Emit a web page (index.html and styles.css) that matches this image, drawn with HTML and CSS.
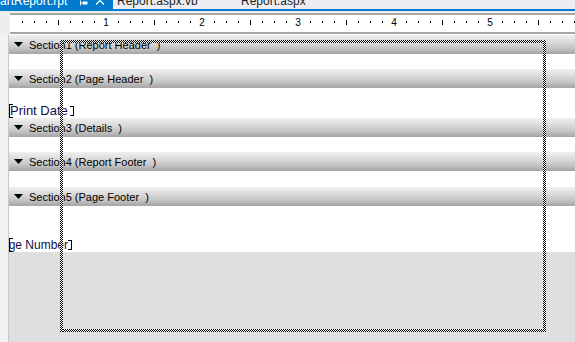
FILE: index.html
```
<!DOCTYPE html>
<html>
<head>
<meta charset="utf-8">
<link rel="stylesheet" href="styles.css">
</head>
<body>
<div class="tabs">
  <div class="tab tab-active">
    <span class="tab-label">artReport.rpt</span>
    <svg class="pin" width="9" height="9" viewBox="0 0 9 9"><path d="M1.5 0.5v5M1.5 3h2" stroke="#fff" stroke-width="1" fill="none"/><rect x="3.5" y="1.5" width="5" height="3" fill="#fff"/></svg>
    <svg class="close" width="10" height="9" viewBox="0 0 10 9"><path d="M1 -3.5L9 4.5M9 -3.5L1 4.5" stroke="#fff" stroke-width="1.2" fill="none"/></svg>
  </div>
  <div class="tab tab-vb"><span class="tab-label">Report.aspx.vb</span></div>
  <div class="tab"><span class="tab-label">Report.aspx</span></div>
</div>
<div class="tabline"></div>
<div class="ruler-row">
  <div class="ruler-gutter"></div>
  <div class="ruler">
    <svg width="565" height="17" viewBox="0 0 565 17">
      <path stroke="#000" stroke-width="1" fill="none" d="M12.5 6v2M24.5 6v2M36.5 6v2M60.5 6v2M72.5 6v2M84.5 6v2M108.5 6v2M120.5 6v2M132.5 6v2M156.5 6v2M168.5 6v2M180.5 6v2M204.5 6v2M216.5 6v2M228.5 6v2M252.5 6v2M264.5 6v2M276.5 6v2M300.5 6v2M312.5 6v2M324.5 6v2M348.5 6v2M360.5 6v2M372.5 6v2M396.5 6v2M408.5 6v2M420.5 6v2M444.5 6v2M456.5 6v2M468.5 6v2M492.5 6v2M504.5 6v2M516.5 6v2M540.5 6v2M552.5 6v2M564.5 6v2M48.5 5v5M144.5 5v5M240.5 5v5M336.5 5v5M432.5 5v5M528.5 5v5"/>
      <g class="ruler-num" text-anchor="middle">
        <text x="96" y="11">1</text>
        <text x="192" y="11">2</text>
        <text x="288" y="11">3</text>
        <text x="384" y="11">4</text>
        <text x="480" y="11">5</text>
      </g>
    </svg>
  </div>
</div>
<div class="main">
  <div class="gutter"></div>
  <div class="canvas">
    <div class="band"><svg class="tri" width="9" height="5" viewBox="0 0 9 5"><path d="M0 0h9L4.5 5z" fill="#000"/></svg><span class="band-label">Section1 (Report Header  )</span></div>
    <div class="sec sec-1"></div>
    <div class="band"><svg class="tri" width="9" height="5" viewBox="0 0 9 5"><path d="M0 0h9L4.5 5z" fill="#000"/></svg><span class="band-label">Section2 (Page Header  )</span></div>
    <div class="sec sec-2">
      <div class="field field-date"><span class="field-text">Print Date</span></div>
    </div>
    <div class="band"><svg class="tri" width="9" height="5" viewBox="0 0 9 5"><path d="M0 0h9L4.5 5z" fill="#000"/></svg><span class="band-label">Section3 (Details  )</span></div>
    <div class="sec sec-3"></div>
    <div class="band"><svg class="tri" width="9" height="5" viewBox="0 0 9 5"><path d="M0 0h9L4.5 5z" fill="#000"/></svg><span class="band-label">Section4 (Report Footer  )</span></div>
    <div class="sec sec-4"></div>
    <div class="band"><svg class="tri" width="9" height="5" viewBox="0 0 9 5"><path d="M0 0h9L4.5 5z" fill="#000"/></svg><span class="band-label">Section5 (Page Footer  )</span></div>
    <div class="sec sec-5">
      <div class="field field-page"><span class="field-text">Page Number</span></div>
    </div>
    <div class="rest"></div>
    <div class="marquee">
      <div class="edge edge-top"></div>
      <div class="edge edge-bottom"></div>
      <div class="edge edge-left"></div>
      <div class="edge edge-right"></div>
    </div>
  </div>
</div>
</body>
</html>
```
FILE: styles.css
```
* { box-sizing: border-box; }
html, body {
  margin: 0;
  padding: 0;
}
body {
  width: 575px;
  height: 342px;
  overflow: hidden;
  background: #eeeef2;
  font-family: "Liberation Sans", Arial, sans-serif;
}

/* Tabs */
.tabs {
  display: flex;
  height: 9px;
  overflow: hidden;
  background: #eeeef2;
}
.tab {
  display: flex;
  align-items: flex-start;
  height: 9px;
  overflow: hidden;
  color: #1e1e1e;
  font-size: 12px;
  line-height: 12px;
}
.tab-label {
  display: block;
  margin-top: -5px;
  white-space: nowrap;
}
.tab-active {
  width: 113px;
  background: #007acc;
  color: #fff;
}
.tab-active .tab-label { margin-left: 0; }
.pin { flex: none; margin-left: 12px; }
.close { flex: none; margin-left: 7px; }
.tab-vb {
  width: 124px;
  margin-left: 4px;
}
.tabline {
  height: 2px;
  background: #007acc;
}

/* Ruler */
.ruler-row {
  display: flex;
  padding-top: 2px;
  background: #eeeef2;
}
.ruler-gutter { width: 10px; flex: none; }
.ruler {
  flex: 1;
  height: 21px;
  background: #fff;
  border-top: 2px solid #a6a6a6;
  border-bottom: 2px solid #a6a6a6;
  overflow: hidden;
}
.ruler svg { display: block; }
.ruler-num {
  font-family: "Liberation Sans", Arial, sans-serif;
  font-size: 10px;
  fill: #000;
}

/* Main design area */
.main {
  display: flex;
  height: 308px;
}
.gutter {
  width: 9px;
  flex: none;
  background: #f2f2f2;
  border-right: 1px solid #c8c8c8;
}
.canvas {
  flex: 1;
  display: flex;
  flex-direction: column;
  position: relative;
  background: #fff;
  padding-top: 1px;
}
.band {
  height: 19px;
  flex: none;
  display: flex;
  align-items: center;
  padding-left: 5px;
  background: linear-gradient(#f0f0f0 0%, #dcdcdc 35%, #c4c4c4 70%, #a4a4a4 100%);
}
.tri { flex: none; display: block; }
.band-label {
  margin-left: 6px;
  font-size: 11px;
  color: #000;
  white-space: pre;
}
.sec { flex: none; background: #fff; }
.sec-1 { height: 15px; }
.sec-2 { height: 30px; padding-top: 16px; }
.sec-3 { height: 15px; }
.sec-4 { height: 16px; }
.sec-5 { height: 46px; padding-top: 32px; }
.rest { flex: 1; background: #dfdfdf; }

/* Fields */
.field {
  position: relative;
  height: 14px;
  color: #101050;
  line-height: 14px;
  white-space: nowrap;
  overflow: hidden;
}
.field-date { width: 65px; font-size: 13px; }
.field-date .field-text { margin-left: 1px; }
.field-page { width: 63px; font-size: 12px; }
.field-page .field-text { display: inline-block; margin-left: -15px; }
.field::before {
  content: "";
  position: absolute;
  left: 0;
  top: 0;
  bottom: 0;
  width: 3px;
  border: 1px solid #000;
  border-right: none;
}
.field::after {
  content: "";
  position: absolute;
  right: 0;
  top: 2px;
  bottom: 2px;
  width: 3px;
  border: 1px solid #000;
  border-left: none;
}

/* Selection marquee */
.marquee {
  position: absolute;
  left: 51px;
  top: 6px;
  width: 486px;
  height: 292px;
  pointer-events: none;
}
.edge {
  position: absolute;
  background: repeating-conic-gradient(#000 0 25%, #fff 0 50%) 0 0 / 2px 2px;
}
.edge-top { left: 0; top: 0; width: 100%; height: 3px; }
.edge-bottom { left: 0; bottom: 0; width: 100%; height: 3px; }
.edge-left { left: 0; top: 0; width: 3px; height: 100%; }
.edge-right { right: 0; top: 0; width: 3px; height: 100%; }
```
